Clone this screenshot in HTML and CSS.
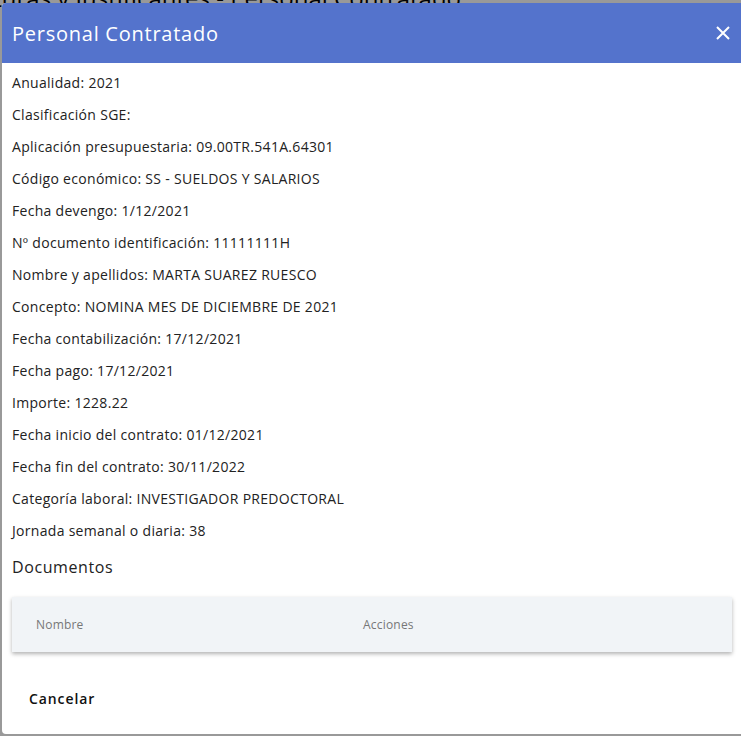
FILE: index.html
```html
<!DOCTYPE html>
<html lang="es">
<head>
<meta charset="utf-8">
<title>Personal Contratado</title>
<link rel="stylesheet" href="styles.css">
</head>
<body>
<div class="page">
  <div class="page-title">Facturas y Justificantes - Personal Contratado</div>
</div>
<div class="overlay"></div>
<div class="modal">
  <div class="modal-header">
    <span class="modal-title">Personal Contratado</span>
    <button class="close" aria-label="Cerrar">
      <svg width="14" height="14" viewBox="0 0 14 14"><path d="M1 1L13 13M13 1L1 13" stroke="#fff" stroke-width="2" fill="none"/></svg>
    </button>
  </div>
  <div class="modal-body">
    <p class="row">Anualidad: 2021</p>
    <p class="row">Clasificación SGE:</p>
    <p class="row">Aplicación presupuestaria: 09.00TR.541A.64301</p>
    <p class="row">Código económico: SS - SUELDOS Y SALARIOS</p>
    <p class="row">Fecha devengo: 1/12/2021</p>
    <p class="row">Nº documento identificación: 11111111H</p>
    <p class="row">Nombre y apellidos: MARTA SUAREZ RUESCO</p>
    <p class="row">Concepto: NOMINA MES DE DICIEMBRE DE 2021</p>
    <p class="row">Fecha contabilización: 17/12/2021</p>
    <p class="row">Fecha pago: 17/12/2021</p>
    <p class="row">Importe: 1228.22</p>
    <p class="row">Fecha inicio del contrato: 01/12/2021</p>
    <p class="row">Fecha fin del contrato: 30/11/2022</p>
    <p class="row">Categoría laboral: INVESTIGADOR PREDOCTORAL</p>
    <p class="row">Jornada semanal o diaria: 38</p>
    <h3 class="section">Documentos</h3>
    <div class="table">
      <div class="th th-name">Nombre</div>
      <div class="th">Acciones</div>
    </div>
  </div>
  <div class="modal-footer">
    <button class="btn">Cancelar</button>
  </div>
</div>
</body>
</html>
```
FILE: styles.css
```css
* { box-sizing: border-box; }
html, body { margin: 0; padding: 0; }
body {
  width: 741px;
  height: 736px;
  overflow: hidden;
  position: relative;
  background: #fff;
  font-family: "Open Sans", "Noto Sans", sans-serif;
}
.page-title {
  margin-top: -19px;
  margin-left: -44px;
  font-size: 24px;
  color: #000;
  white-space: nowrap;
}
.overlay {
  position: absolute;
  inset: 0;
  background: rgba(0, 0, 0, 0.4);
}
.modal {
  position: absolute;
  left: 2px;
  top: 3px;
  width: 760px;
  height: 731px;
  background: #fff;
  border-radius: 4px;
  overflow: hidden;
  display: flex;
  flex-direction: column;
}
.modal-header {
  height: 60px;
  background: #5473cc;
  display: flex;
  align-items: center;
  justify-content: space-between;
  padding: 0 0 0 10px;
}
.modal-title {
  color: #fff;
  font-size: 20px;
  letter-spacing: 0.75px;
}
.close {
  background: none;
  border: 0;
  padding: 0;
  margin-right: 32px;
  width: 14px;
  height: 14px;
  display: flex;
}
.modal-body {
  padding: 4px 0 0 10px;
  width: 739px;
}
.row {
  margin: 0;
  height: 32px;
  line-height: 32px;
  font-size: 14px;
  letter-spacing: 0.3px;
  color: #222;
}
.section {
  margin: 4px 0 0;
  height: 32px;
  line-height: 32px;
  font-size: 16px;
  font-weight: 400;
  letter-spacing: 0.6px;
  color: #222;
}
.table {
  margin-top: 14px;
  width: 720px;
  height: 55px;
  background: #f1f4f7;
  box-shadow: 0 2px 4px rgba(0, 0, 0, 0.3);
  display: flex;
  align-items: center;
  padding-left: 24px;
}
.th {
  font-size: 12px;
  color: #777;
  letter-spacing: 0.2px;
}
.th-name { width: 327px; }
.modal-footer {
  padding: 35px 0 0 27px;
}
.btn {
  background: none;
  border: 0;
  padding: 0;
  font-family: inherit;
  font-size: 14px;
  font-weight: 600;
  letter-spacing: 0.9px;
  color: #111;
}
```
